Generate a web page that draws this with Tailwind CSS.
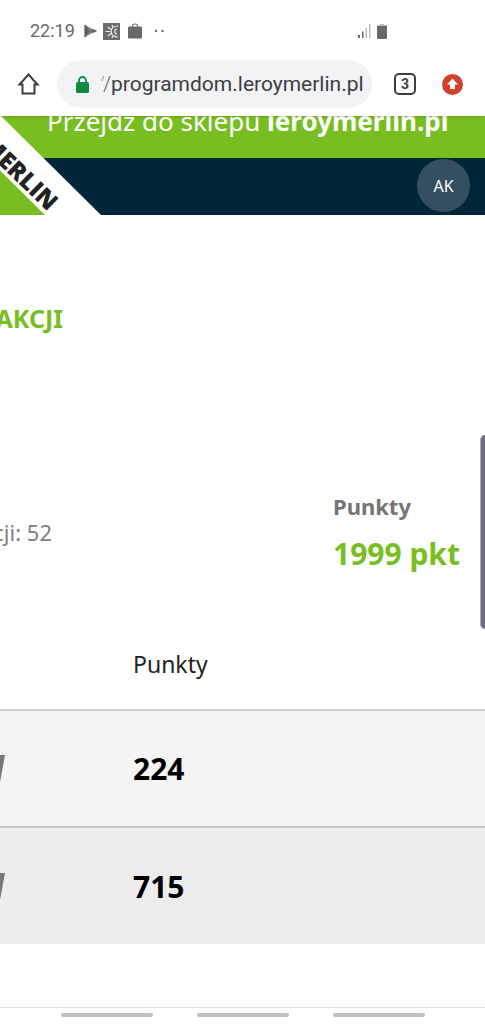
<!DOCTYPE html>
<html lang="pl">
<head>
<meta charset="utf-8">
<meta name="viewport" content="width=device-width, initial-scale=1">
<title>Program DOM</title>
<script src="https://cdn.jsdelivr.net/npm/@tailwindcss/browser@4"></script>
</head>
<body class="flex min-h-screen flex-col overflow-x-hidden bg-white font-['Noto_Sans',sans-serif]">
<header class="relative z-10 bg-white pb-2 font-['Roboto',sans-serif] shadow-sm">
  <div class="flex h-15 items-center pl-[30px] pt-0.5 text-[#686868]">
    <span class="text-lg leading-6">22:19</span>
    <svg class="ml-2 size-4" viewBox="0 0 16 16" aria-hidden="true"><path d="M1.500 2 14 8 1.500 14Z" fill="#aaa"/><path d="M1.500 2v12L7 8Z" fill="#606060"/><path d="m1.500 2 9 7M1.500 14l9-7" stroke="#707070" stroke-width="1.500"/><path d="m7 8 3-2 4 2-4 2Z" fill="#666"/></svg>
    <svg class="ml-1 size-[17px]" viewBox="0 0 17 17" aria-hidden="true"><path d="M0 0h17v17H0z" fill="#6c6c6c"/><path d="M15 3C6 3 6 14 15 14M9 2l1 2.500M5 4l3 2.500M2.500 8.500H7M5 13l3-2.500M9 15l1-2.500M14 6c-3 0-3 5 0 5" fill="none" stroke="#eee" stroke-width="1.200"/></svg>
    <svg class="ml-2 h-4 w-[14px]" viewBox="0 0 14 16" aria-hidden="true"><path d="M4.500 4V2.500Q4.500 1 7 1t2.500 1.500V4" fill="none" stroke="#777" stroke-width="1.200"/><rect y="3.500" width="14" height="12" rx="1" fill="#686868"/></svg>
    <svg class="ml-3 h-2 w-3" viewBox="0 0 12 8" aria-hidden="true"><circle cx="2" cy="4" r="1.200" fill="#686868"/><circle cx="8.500" cy="4" r="1.200" fill="#686868"/></svg>
    <svg class="ml-auto h-3.5 w-[13px]" viewBox="0 0 13 14" aria-hidden="true"><path d="M0 11h2v3H0zM4 7.500h1.500V14H4z" fill="#686868"/><path d="M7.500 4H9v10H7.500zM11 0h1.500v14H11z" fill="#bbb"/></svg>
    <svg class="ml-1.5 mr-[98px] h-[15px] w-2.5" viewBox="0 0 10 15" aria-hidden="true"><path d="M3 0h4v1h3v2H0V1h3z" fill="#bbb"/><path d="M0 2h10v12q0 1-1 1H1q-1 0-1-1z" fill="#686868"/></svg>
  </div>
  <div class="flex items-center pl-[17px] pr-[22px]">
    <button aria-label="Strona główna" class="shrink-0"><svg class="size-6" viewBox="0 0 24 24"><path d="M2.500 12.500 11.500 2.500 20.500 12.500H17.500V21.500H5.500V12.500Z" fill="none" stroke="#3c4043" stroke-width="2"/></svg></button>
    <div class="ml-4 flex h-12 min-w-0 flex-1 items-center rounded-full bg-[#f1f3f4] pl-[19px]">
      <svg class="h-[17px] w-[13px] shrink-0" viewBox="0 0 13 17" aria-hidden="true"><path d="M3 7V4.500a3.500 3.500 0 0 1 7 0V7" fill="none" stroke="#0d8a43" stroke-width="1.800"/><rect y="6" width="13" height="11" rx="1.500" fill="#0d8a43"/></svg>
      <svg class="ml-3 h-5 w-[10px] shrink-0" viewBox="0 0 10 20" aria-hidden="true"><path d="m2.500 2-1.500 5" stroke="#b4b7b9" stroke-width="1.500"/><path d="M9 2 3 18" stroke="#85898c" stroke-width="1.600"/></svg>
      <input aria-label="Adres strony" class="h-8 min-w-0 flex-1 bg-transparent text-[21px] text-[#3c4043] outline-none" value="programdom.leroymerlin.pl">
    </div>
    <button aria-label="Otwarte karty" class="ml-[22px] flex size-[22px] shrink-0 items-center justify-center rounded-[5px] border-2 border-[#3c4043] text-sm font-bold leading-none text-[#3c4043]">3</button>
    <button aria-label="Aktualizacja" class="ml-[26px] shrink-0"><svg class="block size-[21px]" viewBox="0 0 21 21"><circle cx="10.500" cy="10.500" r="10.500" fill="#d0402f"/><path d="m10.500 4.500 5.500 6h-3V15H8v-4.500H5z" fill="#fff"/></svg></button>
  </div>
</header>
<div class="relative overflow-hidden">
  <a href="#" class="-mt-3 flex h-[54px] items-start bg-[#78be20] pl-[47px] text-[26px] leading-[34px] whitespace-nowrap text-white"><span>Przejdź do sklepu <b>leroymerlin.pl</b></span></a>
  <nav class="flex h-[57px] items-start justify-end bg-[#00263a] pt-px pr-[15px]">
    <button class="size-[53px] rounded-full bg-[#34505f] text-base text-white">AK</button>
  </nav>
  <a href="#" aria-label="Leroy Merlin" class="absolute bottom-0 left-0"><svg class="block h-[99px] w-[101px]" viewBox="0 0 101 99"><path d="M0 0h1l100 99H0z" fill="#fff"/><path d="M0 54.500 45 99H0z" fill="#78be20"/><text transform="translate(48 96) rotate(44)" text-anchor="end" font-family="Open Sans, sans-serif" font-weight="800" font-size="24" fill="#222">MERLIN</text></svg></a>
</div>
<main class="relative flex-1 overflow-hidden">
  <h1 class="mt-[85px] flex w-[63px] justify-end text-[25px] leading-9 font-bold text-[#78be20]">AKCJI</h1>
  <section class="mt-[150px] flex items-start justify-between pr-[25px]">
    <p class="mt-[30px] flex w-[52px] justify-end text-[22px] leading-8 whitespace-nowrap text-[#808080]">cji: 52</p>
    <dl class="font-bold">
      <dt class="text-[22px] leading-10 text-[#757575]">Punkty</dt>
      <dd class="mt-2 text-[30px] leading-10 text-[#78be20]">1999 pkt</dd>
    </dl>
  </section>
  <table class="mt-[45px] w-full table-fixed border-collapse text-left">
    <colgroup><col class="w-[133px]"><col></colgroup>
    <thead><tr class="h-[91px] border-b-2 border-[#cdcdcd] text-[23px] text-[#222]"><td></td><th scope="col" class="font-normal">Punkty</th></tr></thead>
    <tbody class="text-[30px] font-bold text-black">
      <tr class="h-[117px] border-b-2 border-[#c6c6c6] bg-[#f4f4f4]"><td><svg class="h-[27px] w-[5px]" viewBox="0 0 5 27" aria-hidden="true"><path d="M0 0h5L0 27z" fill="#777"/></svg></td><td>224</td></tr>
      <tr class="h-[117px] bg-[#ededed]"><td><svg class="h-[27px] w-[5px]" viewBox="0 0 5 27" aria-hidden="true"><path d="M0 0h5L0 27z" fill="#777"/></svg></td><td>715</td></tr>
    </tbody>
  </table>
  <div class="absolute right-0 top-[220px] h-[194px] w-[5px] rounded-l-md border-l border-[#aaa8b2] bg-[#716e7d]"></div>
</main>
<footer class="flex h-[17px] items-start justify-center gap-11 border-t border-[#dedede] pt-[5px]">
  <span class="h-1 w-[92px] rounded-full bg-[#c0c0c0]"></span><span class="h-1 w-[92px] rounded-full bg-[#c0c0c0]"></span><span class="h-1 w-[92px] rounded-full bg-[#c0c0c0]"></span>
</footer>
</body>
</html>
